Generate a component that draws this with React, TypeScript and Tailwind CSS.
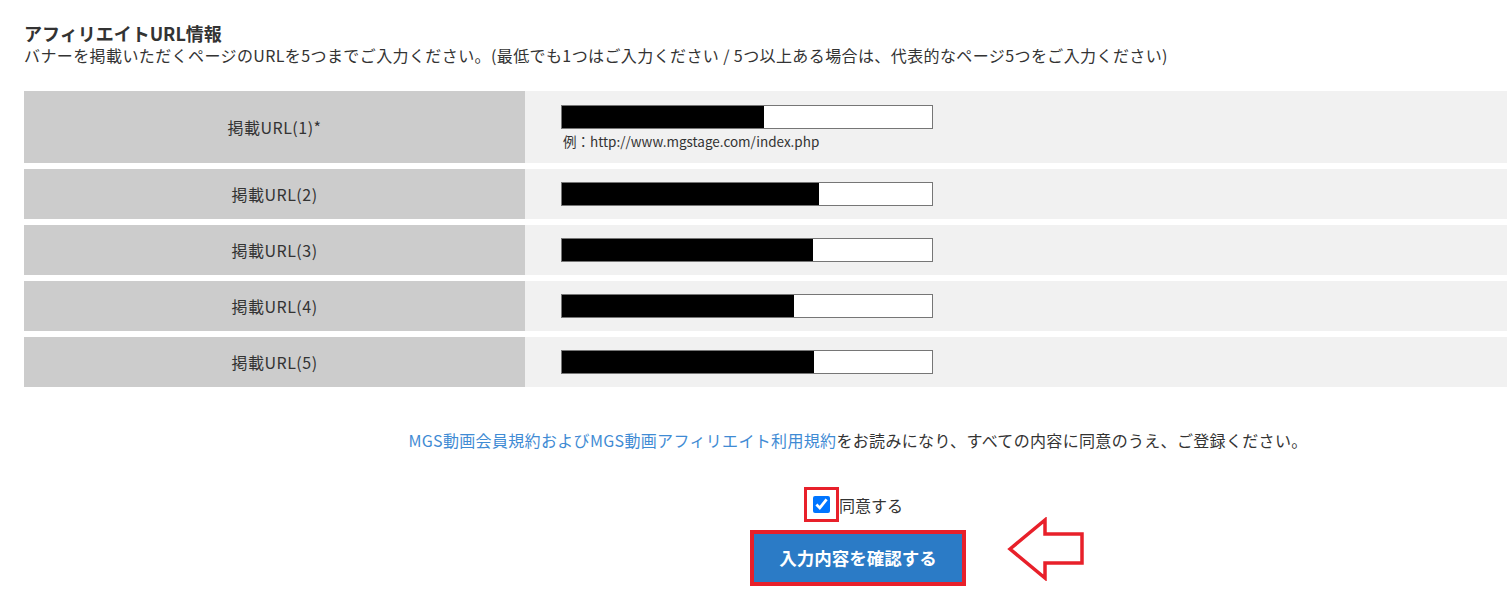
const rows = [
  { label: "掲載URL(1)*", mask: 202, example: true, first: true },
  { label: "掲載URL(2)", mask: 257 },
  { label: "掲載URL(3)", mask: 251 },
  { label: "掲載URL(4)", mask: 232 },
  { label: "掲載URL(5)", mask: 252 },
];

const font = { fontFamily: '"Noto Sans CJK JP", "Noto Sans", sans-serif' };

const App = () => {
  return (
    <div className="w-full min-h-[615px] overflow-hidden bg-white text-[#333]" style={font}>
      <div className="w-[1692px] pl-[24px] pt-[22px]">
        <h2 className="text-[18px] leading-[23px] font-bold text-[#333]">アフィリエイトURL情報</h2>
        <p className="text-[16px] leading-[20px] tracking-[0.4px]">
          バナーを掲載いただくページのURLを5つまでご入力ください。(最低でも1つはご入力ください / 5つ以上ある場合は、代表的なページ5つをご入力ください)
        </p>

        <div className="mt-[26px] flex flex-col gap-[6px]">
          {rows.map((row) => (
            <div key={row.label} className={`flex ${row.first ? "h-[72px]" : "h-[50px]"}`}>
              <div className="w-[501px] shrink-0 bg-[#cccccc] flex items-center justify-center text-[16px] tracking-[0.5px] text-[#333]">
                {row.label}
              </div>
              <div className="flex-1 bg-[#f1f1f1] flex flex-col justify-center pl-[36px]">
                <div className="w-[372px] h-[24px] bg-white border border-[#767676] flex">
                  <div className="h-full bg-black" style={{ width: row.mask }} />
                </div>
                {row.example && (
                  <div className="mt-[3px] pl-[2px] text-[13.5px] leading-[18px] text-[#333]">
                    例：http://www.mgstage.com/index.php
                  </div>
                )}
              </div>
            </div>
          ))}
        </div>

        <div className="flex flex-col items-center">
          <p className="mt-[41px] text-[16px] leading-[24px] tracking-[0.33px]">
            <a href="#" className="text-[#3f8bd4]">
              MGS動画会員規約およびMGS動画アフィリエイト利用規約
            </a>
            をお読みになり、すべての内容に同意のうえ、ご登録ください。
          </p>

          <label className="mt-[35px] flex items-center pr-[9px] text-[16px]">
            <span className="w-[35px] h-[35px] border-[3px] border-[#e8202a] flex items-center justify-center pl-[1px]">
              <input type="checkbox" defaultChecked className="w-[17px] h-[17px] accent-[#0075ff]" />
            </span>
            <span>同意する</span>
          </label>

          <div className="relative mt-[8px]">
            <button className="w-[216px] h-[56px] border-[4px] border-[#e8202a] bg-[#2b7bc6] text-white text-[17.5px] font-bold">
              入力内容を確認する
            </button>
            <svg
              className="absolute left-full top-[-13px] ml-[41px]"
              width="78"
              height="64"
              viewBox="0 0 78 64"
            >
              <polygon
                points="3,32 38,3 38,17 75,17 75,46 38,46 38,61"
                fill="white"
                stroke="#e8202a"
                strokeWidth="3.5"
                strokeLinejoin="miter"
              />
            </svg>
          </div>
        </div>
      </div>
    </div>
  );
};

export default App;
